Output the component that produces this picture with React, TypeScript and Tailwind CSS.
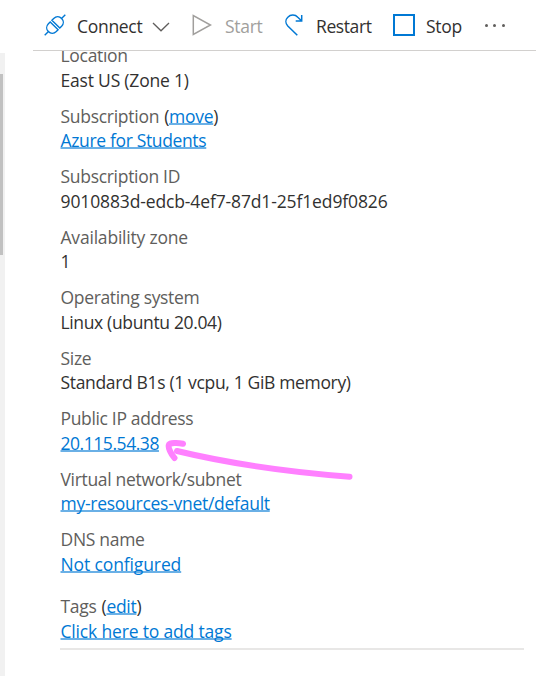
import type { ReactNode } from "react";

type Row = { label: string; action?: string; value: string; link?: boolean; labelClass: string; valueClass: string; gap?: string };

const rows: Row[] = [
  { label: "Location", value: "East US (Zone 1)", labelClass: "tracking-[-0.3px]", valueClass: "tracking-[-0.2px]" },
  { label: "Subscription", action: "move", value: "Azure for Students", link: true, labelClass: "tracking-[-0.28px]", valueClass: "tracking-[-0.35px]" },
  { label: "Subscription ID", value: "9010883d-edcb-4ef7-87d1-25f1ed9f0826", labelClass: "tracking-[-0.3px]", valueClass: "tracking-[-0.13px]" },
  { label: "Availability zone", value: "1", labelClass: "tracking-[-0.2px]", valueClass: "tracking-[-0.3px]" },
  { label: "Operating system", value: "Linux (ubuntu 20.04)", labelClass: "tracking-[-0.33px]", valueClass: "tracking-[-0.35px]" },
  { label: "Size", value: "Standard B1s (1 vcpu, 1 GiB memory)", labelClass: "tracking-[-0.3px]", valueClass: "tracking-[-0.34px]" },
  { label: "Public IP address", value: "20.115.54.38", link: true, labelClass: "tracking-[-0.34px]", valueClass: "tracking-[-0.45px]" },
  { label: "Virtual network/subnet", value: "my-resources-vnet/default", link: true, labelClass: "tracking-[-0.32px]", valueClass: "tracking-[-0.27px]" },
  { label: "DNS name", value: "Not configured", link: true, labelClass: "tracking-[-0.3px]", valueClass: "tracking-[-0.12px]" },
  { label: "Tags", action: "edit", value: "Click here to add tags", link: true, labelClass: "tracking-[-0.3px]", valueClass: "tracking-[-0.17px]", gap: "mt-[6.5px]" },
];

function Link({ children }: { children: ReactNode }) {
  return (
    <a href="#" className="text-[#0078d4] underline decoration-[#6ab0e6] decoration-2 underline-offset-0 [text-decoration-skip-ink:none]">
      {children}
    </a>
  );
}

function Toolbar() {
  return (
    <div className="relative z-10 flex h-[51px] shrink-0 items-center border-b border-[#d2d0ce] bg-white pt-[3px] pl-[11px] text-[#323130]">
      <svg className="-mt-[3px] h-[22px] w-[22px] shrink-0" viewBox="0 0 22 22" fill="none" stroke="#0078d4" strokeWidth="1.4">
        <path d="M.7 21.300L4.500 17.500M17.500 4.500L21.300.700" />
        <path d="M6.200 7.900L14.100 15.800L12.300 17.600C10 19.800 6.600 19.900 4.400 17.600C2.100 15.400 2.200 12 4.400 9.700Z" />
        <path d="M7.900 6.200L15.800 14.100L17.600 12.300C19.800 10 19.900 6.600 17.600 4.400C15.400 2.100 12 2.200 9.700 4.400Z" />
      </svg>
      <span className="ml-[11px] w-[66px] tracking-[-0.3px]">Connect</span>
      <svg className="ml-[9px] h-[10px] w-[18px] shrink-0" viewBox="0 0 18 10" fill="none" stroke="#605e5c" strokeWidth="1.3">
        <path d="M1 1l8 7.800L17 1" />
      </svg>
      <svg className="-mt-[3px] ml-[22px] h-[22px] w-[20px] shrink-0" viewBox="0 0 20 22" fill="none" stroke="#a19f9d" strokeWidth="1.5">
        <path d="M1.300 1.500v19L18.500 11z" />
      </svg>
      <span className="ml-[13px] w-[36px] tracking-[-0.3px] text-[#a19f9d]">Start</span>
      <svg className="-mt-[3px] ml-[24px] h-[22px] w-[18px] shrink-0" viewBox="0 0 18 22" fill="none" stroke="#0078d4" strokeWidth="1.5">
        <path d="M12.300 21.300L2.800 12C.3 9.300.3 5.600 2.800 3.200c2.800-2.900 7.400-2.700 10 0L16.500 6.700M10.700 7h6V.900" />
      </svg>
      <span className="ml-[13px] w-[55px] tracking-[-0.4px]">Restart</span>
      <span className="-mt-[3px] ml-[22px] h-[22px] w-[22px] shrink-0 border-2 border-[#0078d4]" />
      <span className="ml-[11px] w-[36px] tracking-[-0.3px]">Stop</span>
      <span className="-mt-[3px] ml-[23px] flex gap-[5.3px]">
        <i className="h-[3px] w-[3px] rounded-full bg-[#605e5c]" />
        <i className="h-[3px] w-[3px] rounded-full bg-[#605e5c]" />
        <i className="h-[3px] w-[3px] rounded-full bg-[#605e5c]" />
      </span>
    </div>
  );
}

export default function App() {
  return (
    <div className="relative flex h-[676px] w-[536px] overflow-hidden bg-white font-['Open_Sans','Noto_Sans',sans-serif] text-[17.5px]">
      <div className="mt-[53px] w-[5px] shrink-0 bg-[#f1f1f1] pt-[21px]">
        <div className="h-[181px] w-[3px] bg-[#c1c1c1]" />
      </div>
      <div className="ml-[28px] flex min-w-0 flex-1 flex-col">
        <Toolbar />
        <div className="-mt-[7.8px] mr-[12px] ml-[27px] whitespace-nowrap border-b-2 border-[#e8e7e6] pb-[5.2px] leading-[24px]">
          {rows.map((r) => (
            <div key={r.label} className={`pb-[12px] pl-[0.5px] last:pb-0 ${r.gap ?? ""}`}>
              <div className={`h-[24.5px] ${r.labelClass}`}>
                <span className="whitespace-pre text-[#605e5c]">
                  {r.label}
                  {r.action && (
                    <span className="ml-[0.8px] text-[#323130]">
                      {" ("}
                      <Link>{r.action}</Link>)
                    </span>
                  )}
                </span>
              </div>
              <div className={`h-[24px] text-[#323130] ${r.valueClass}`}>
                {r.link ? <Link>{r.value}</Link> : r.value}
              </div>
            </div>
          ))}
        </div>
      </div>
      <svg className="pointer-events-none absolute top-[434px] left-[160px] h-[50px] w-[200px]" viewBox="160 434 200 50" fill="none" stroke="#ff80ff" strokeWidth="6" strokeLinecap="round" strokeLinejoin="round">
        <path d="M349.500 476.700C295 472.500 235 465 177 451M183 443.800c-6-1.300-13-.8-14 .7-1.500 2.500 2 9.500 5.500 13.500" />
      </svg>
    </div>
  );
}
